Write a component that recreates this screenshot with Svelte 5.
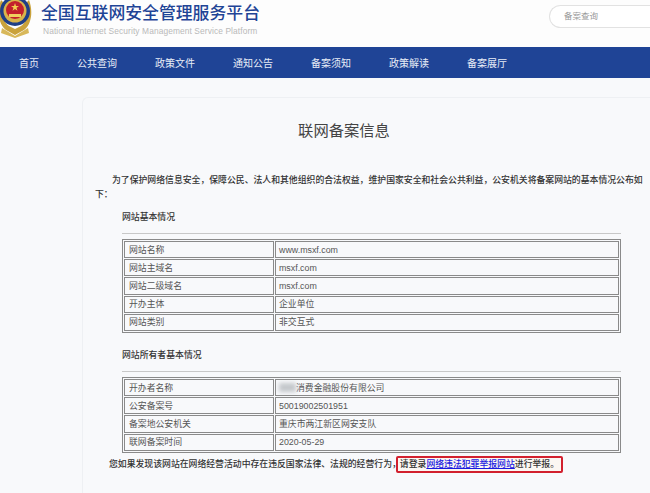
<script>
	const navItems = ["首页", "公共查询", "政策文件", "通知公告", "备案须知", "政策解读", "备案展厅"];
	const siteRows = [
		["网站名称", "www.msxf.com"],
		["网站主域名", "msxf.com"],
		["网站二级域名", "msxf.com"],
		["开办主体", "企业单位"],
		["网站类别", "非交互式"],
	];
	const ownerRows = [
		["公安备案号", "50019002501951"],
		["备案地公安机关", "重庆市两江新区网安支队"],
		["联网备案时间", "2020-05-29"],
	];
</script>

<div class="page">
	<header class="top">
		<svg class="emblem" viewBox="0 0 34 44" width="34" height="44" aria-hidden="true">
			<path d="M3 6C-1 16 0 30 8 36L17 41 26 36C34 30 35 16 31 6L27 10C30 18 29 28 23 32L17 35 11 32C5 28 4 18 7 10Z" fill="#c9a23c" />
			<path d="M4 34L17 42 30 34 31 39 17 44 3 39Z" fill="#d8b85a" />
			<circle cx="17" cy="17" r="15" fill="#1f3f86" />
			<circle cx="17" cy="17" r="11.5" fill="#d9b34a" />
			<circle cx="17" cy="16" r="9" fill="#c3202c" />
			<path d="M17 9l1 3h3l-2.500 1.800 1 3L17 15l-2.500 1.800 1-3L13 12h3z" fill="#f3d04e" />
			<path d="M11 20h12v3H11z" fill="#f0cf5e" />
		</svg>
		<div class="brand">
			<h1>全国互联网安全管理服务平台</h1>
			<p>National Internet Security Management Service Platform</p>
		</div>
		<div class="search">备案查询</div>
	</header>

	<nav class="nav">
		{#each navItems as item}
			<span class="nav-item">{item}</span>
		{/each}
	</nav>

	<main class="card">
		<h2 class="title">联网备案信息</h2>
		<p class="intro">为了保护网络信息安全，保障公民、法人和其他组织的合法权益，维护国家安全和社会公共利益，公安机关将备案网站的基本情况公布如下：</p>

		<section class="block">
			<h3>网站基本情况</h3>
			<table>
				<tbody>
					{#each siteRows as row}
						<tr><td class="label">{row[0]}</td><td>{row[1]}</td></tr>
					{/each}
				</tbody>
			</table>
		</section>

		<section class="block second">
			<h3>网站所有者基本情况</h3>
			<table>
				<tbody>
					<tr>
						<td class="label">开办者名称</td>
						<td><span class="smudge"></span>消费金融股份有限公司</td>
					</tr>
					{#each ownerRows as row}
						<tr><td class="label">{row[0]}</td><td>{row[1]}</td></tr>
					{/each}
				</tbody>
			</table>
		</section>

		<p class="note">
			您如果发现该网站在网络经营活动中存在违反国家法律、法规的经营行为，<span class="marked">请登录<a href="#report">网络违法犯罪举报网站</a>进行举报。</span>
		</p>
	</main>
</div>

<style>
	:global(body) {
		margin: 0;
		background: #f8f9fb;
	}
	.page {
		width: 650px;
		height: 493px;
		overflow: hidden;
		background: #f8f9fb;
		font-family: "Liberation Sans", "Noto Sans CJK SC", sans-serif;
		color: #333;
	}
	.top {
		display: flex;
		align-items: flex-start;
		height: 47px;
		background: #fdfdfd;
		box-sizing: border-box;
	}
	.emblem {
		flex: none;
		margin: -6px 9px 0 -2px;
	}
	.brand {
		flex: 1;
	}
	.brand h1 {
		margin: 3px 0 0;
		font-size: 16.85px;
		line-height: 22px;
		font-weight: 500;
		color: #1f4496;
		white-space: nowrap;
	}
	.brand p {
		margin: 1px 0 0 2px;
		font-size: 8.4px;
		line-height: 10px;
		color: #b9b9b9;
		letter-spacing: 0.1px;
		white-space: nowrap;
	}
	.search {
		flex: none;
		box-sizing: border-box;
		width: 101px;
		height: 23px;
		margin-top: 5px;
		padding-left: 14px;
		border: 1px solid #e2e2e2;
		border-right: 0;
		border-radius: 12px 0 0 12px;
		background: #fff;
		font-size: 8.5px;
		line-height: 21px;
		color: #999;
	}
	.nav {
		display: flex;
		gap: 38px;
		height: 31px;
		padding-left: 19px;
		background: #1f4496;
		align-items: center;
	}
	.nav-item {
		font-size: 10px;
		color: #e8edf6;
		white-space: nowrap;
	}
	.card {
		box-sizing: border-box;
		height: 420px;
		margin: 19px 0 0 82px;
		padding: 22px 0 0 12px;
		border-top: 1px solid #eef0f3;
		border-left: 1px solid #eef0f3;
		border-top-left-radius: 6px;
	}
	.title {
		margin: 0 0 31px;
		width: 498px;
		text-align: center;
		font-size: 15.3px;
		line-height: 22px;
		font-weight: 400;
		color: #444;
	}
	.intro {
		margin: 0 4px 0 0;
		text-indent: 17px;
		font-size: 8.85px;
		line-height: 14px;
		font-weight: 500;
		color: #333;
	}
	.block {
		width: 499px;
		margin: 10px 0 0 27px;
	}
	.block.second {
		margin-top: 16px;
	}
	h3 {
		margin: 0 0 5px;
		padding-bottom: 10px;
		border-bottom: 1px solid #c8c8c8;
		font-size: 8.85px;
		line-height: 12px;
		font-weight: 500;
		color: #333;
	}
	table {
		width: 100%;
		box-sizing: border-box;
		border: 1px solid #8a8a8a;
		border-collapse: separate;
		border-spacing: 1px;
		table-layout: fixed;
	}
	td {
		height: 17.2px;
		padding: 0 0 0 3px;
		box-sizing: border-box;
		border: 1px solid #8a8a8a;
		font-size: 8.85px;
		line-height: 12px;
		color: #555;
		white-space: nowrap;
		overflow: hidden;
	}
	td.label {
		width: 150px;
		padding-left: 4px;
	}
	.smudge {
		display: inline-block;
		width: 17px;
		height: 9px;
		vertical-align: -1px;
		background: #c4c7cb;
		filter: blur(2px);
	}
	.note {
		margin: 2px 0 0 14px;
		font-size: 8.85px;
		line-height: 18px;
		font-weight: 500;
		white-space: nowrap;
	}
	.marked {
		display: inline-block;
		padding: 0 2px;
		margin-left: -5px;
		border: 2px solid #d2202e;
		border-radius: 2px;
		background: #fbf7f2;
		line-height: 13px;
	}
	.marked a {
		color: #1a1ae0;
		text-decoration: underline;
	}
</style>
